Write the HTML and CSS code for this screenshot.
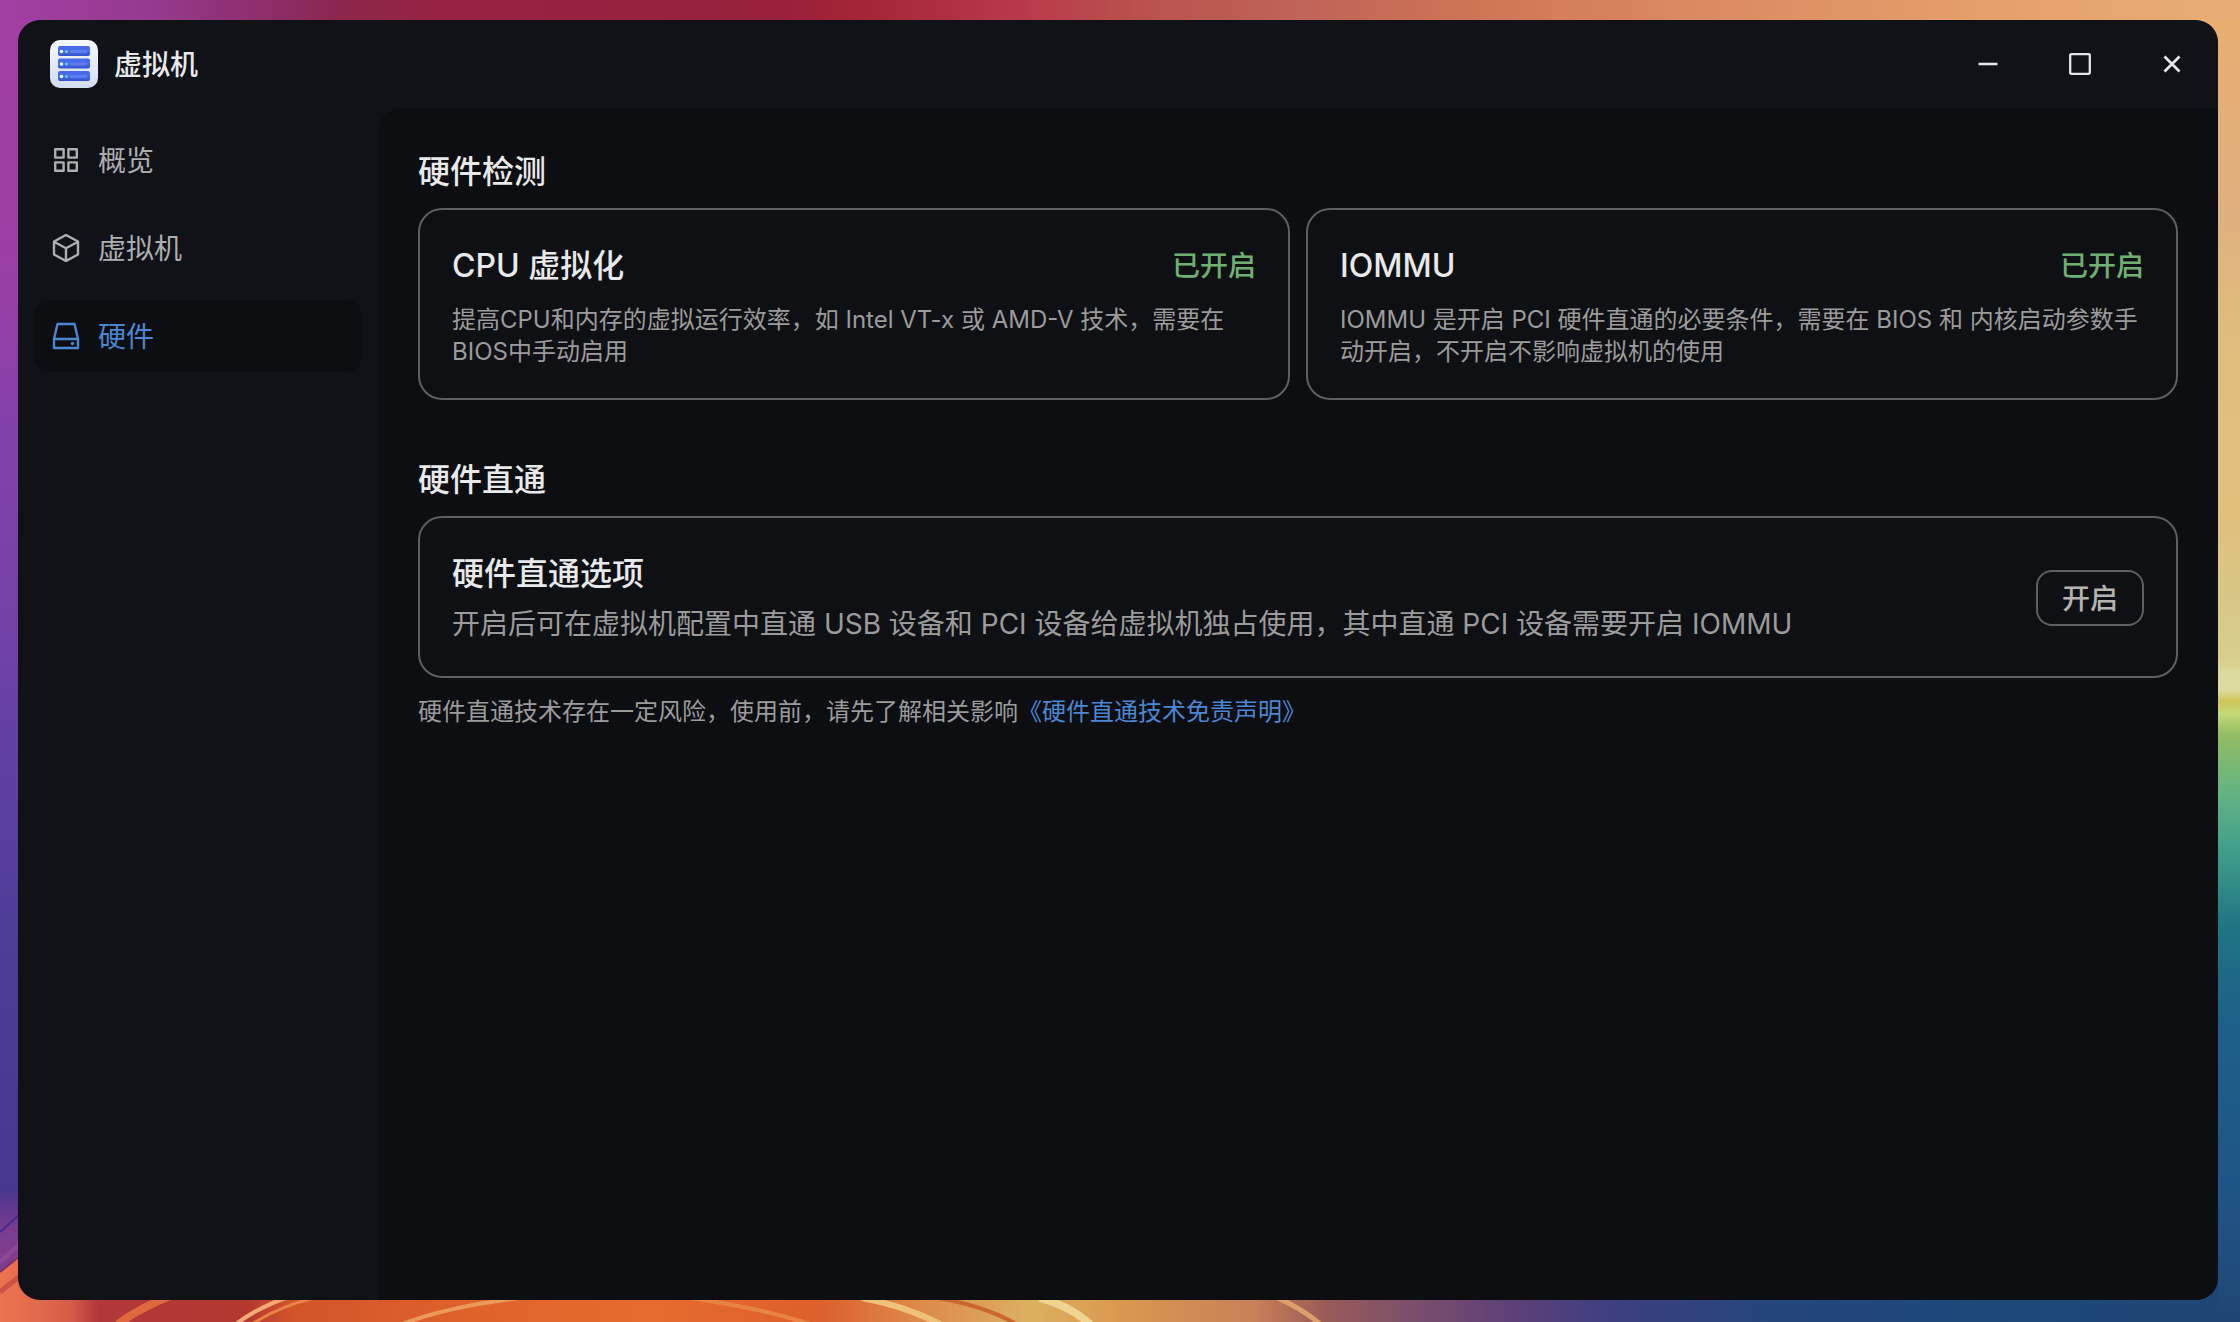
FILE: index.html
```html
<!DOCTYPE html>
<html lang="zh-CN">
<head>
<meta charset="utf-8">
<meta name="viewport" content="width=device-width, initial-scale=1">
<title>虚拟机</title>
<link rel="stylesheet" href="styles.css">
</head>
<body class="desktop">
<svg class="wallpaper" viewBox="0 0 2240 1322" preserveAspectRatio="none" aria-hidden="true">
  <defs>
    <linearGradient id="top" gradientUnits="userSpaceOnUse" x1="0" y1="0" x2="2240" y2="0">
      <stop offset="0" stop-color="#a23fa3"/><stop offset=".065" stop-color="#963a90"/><stop offset=".128" stop-color="#8c2c64"/><stop offset=".155" stop-color="#8b2648"/><stop offset=".2" stop-color="#972142"/><stop offset=".35" stop-color="#98203a"/><stop offset=".39" stop-color="#a52735"/><stop offset=".45" stop-color="#b8374a"/><stop offset=".51" stop-color="#b9524d"/><stop offset=".58" stop-color="#c06358"/><stop offset=".65" stop-color="#cd7355"/><stop offset=".74" stop-color="#d98760"/><stop offset=".89" stop-color="#e5a06b"/><stop offset="1" stop-color="#e8ae75"/>
    </linearGradient>
    <linearGradient id="left" gradientUnits="userSpaceOnUse" x1="0" y1="0" x2="0" y2="1322">
      <stop offset="0" stop-color="#a23fa3"/><stop offset=".22" stop-color="#983fa5"/><stop offset=".32" stop-color="#8441ab"/><stop offset=".45" stop-color="#7642a8"/><stop offset=".57" stop-color="#6140a3"/><stop offset=".7" stop-color="#4f3d98"/><stop offset=".9" stop-color="#49368f"/><stop offset=".93" stop-color="#7a3c90"/><stop offset="1" stop-color="#8a4088"/>
    </linearGradient>
    <linearGradient id="right" gradientUnits="userSpaceOnUse" x1="0" y1="0" x2="0" y2="1322">
      <stop offset="0" stop-color="#eaae70"/><stop offset=".16" stop-color="#dfb07f"/><stop offset=".255" stop-color="#e0bd7c"/><stop offset=".39" stop-color="#e2c07c"/><stop offset=".45" stop-color="#d7c686"/><stop offset=".5" stop-color="#d8cf8c"/><stop offset=".51" stop-color="#dcdca0"/><stop offset=".522" stop-color="#dcdca0"/><stop offset=".53" stop-color="#cfc658"/><stop offset=".54" stop-color="#c5d978"/><stop offset=".555" stop-color="#94bd63"/><stop offset=".6" stop-color="#63b383"/><stop offset=".64" stop-color="#43a08a"/><stop offset=".7" stop-color="#1f7583"/><stop offset=".77" stop-color="#1d6088"/><stop offset=".89" stop-color="#1f5687"/><stop offset="1" stop-color="#1f4674"/>
    </linearGradient>
    <linearGradient id="bottom" gradientUnits="userSpaceOnUse" x1="0" y1="0" x2="2240" y2="0">
      <stop offset="0" stop-color="#ec7350"/><stop offset=".02" stop-color="#e0684c"/><stop offset=".032" stop-color="#d65a48"/><stop offset=".044" stop-color="#b0383a"/><stop offset=".11" stop-color="#b3382f"/><stop offset=".13" stop-color="#d2542a"/><stop offset=".22" stop-color="#e0642a"/><stop offset=".29" stop-color="#e66b2e"/><stop offset=".366" stop-color="#dd602c"/><stop offset=".41" stop-color="#dd8a48"/><stop offset=".46" stop-color="#dcb060"/><stop offset=".5" stop-color="#da984f"/><stop offset=".56" stop-color="#c88058"/><stop offset=".592" stop-color="#9a5a58"/><stop offset=".63" stop-color="#7a4f6a"/><stop offset=".675" stop-color="#5d4078"/><stop offset=".72" stop-color="#3c3f80"/><stop offset=".79" stop-color="#24457c"/><stop offset=".88" stop-color="#1c487a"/><stop offset="1" stop-color="#1f4674"/>
    </linearGradient>
  </defs>
  <path fill="url(#top)" d="M0 0H2240V60H0Z"/>
  <path fill="url(#left)" d="M0 20H60V1322H0Z"/>
  <path fill="url(#right)" d="M2200 20H2240V1322H2200Z"/>
  <path fill="url(#bottom)" d="M0 1272Q10 1265 18 1256L60 1270H2218V1322H0Z"/>
  <g fill="none">
    <path stroke="#45288a" stroke-width="2" d="M0 1232L20 1214"/>
    <path stroke="#7a2f6c" stroke-width="2" d="M0 1272L20 1256"/>
    <path stroke="#8a4796" stroke-width="5" d="M0 1262L20 1244"/>
    <path stroke="#cf5044" stroke-width="5" d="M0 1292L20 1276"/>
    <path stroke="#e0683f" stroke-width="8" d="M118 1324Q140 1308 170 1296"/>
    <path stroke="#f5a878" stroke-width="4" d="M236 1324Q260 1306 292 1296"/>
    <path stroke="#e98246" stroke-width="3" d="M252 1324Q280 1306 314 1298"/>
    <path stroke="#eb9a5a" stroke-width="4" d="M402 1324Q450 1306 520 1298"/>
    <path stroke="#e88442" stroke-width="4" d="M690 1298Q760 1308 810 1324"/>
    <path stroke="#eec27a" stroke-width="6" d="M862 1298Q905 1306 940 1324"/>
    <path stroke="#c8682e" stroke-width="4" d="M938 1298Q985 1306 1016 1324"/>
    <path stroke="#f0d590" stroke-width="8" d="M1040 1298Q1070 1306 1090 1324"/>
    <path stroke="#e0a06a" stroke-width="5" d="M1278 1298Q1304 1310 1320 1324"/>
  </g>
</svg>

<div class="window">
  <header class="titlebar">
    <svg class="app-icon" viewBox="0 0 48 48" aria-hidden="true">
      <defs>
        <linearGradient id="plate" x1="0" y1="0" x2="0" y2="1"><stop offset="0" stop-color="#f4f8fd"/><stop offset="1" stop-color="#d3dcf4"/></linearGradient>
        <linearGradient id="unit" x1="0" y1="0" x2="0" y2="1"><stop offset="0" stop-color="#4a66e6"/><stop offset=".5" stop-color="#4570ec"/><stop offset="1" stop-color="#3450cc"/></linearGradient>
      </defs>
      <rect width="48" height="48" rx="10" fill="url(#plate)"/>
      <g fill="url(#unit)"><rect x="8" y="6" width="32" height="10" rx="2"/><rect x="8" y="18.500" width="32" height="10" rx="2"/><rect x="8" y="31" width="32" height="10" rx="2"/></g>
      <g fill="#5f7cee"><rect x="20" y="10" width="17" height="3" rx="1"/><rect x="20" y="22.500" width="17" height="3" rx="1"/><rect x="20" y="35" width="17" height="3" rx="1"/></g>
      <g fill="#dcfaff"><circle cx="11.500" cy="11.500" r="1.800"/><circle cx="11.500" cy="24" r="1.800"/><circle cx="11.500" cy="36.500" r="1.800"/></g>
      <g fill="#6cc4f8"><circle cx="16.500" cy="11.500" r="1.600"/><circle cx="16.500" cy="24" r="1.600"/><circle cx="16.500" cy="36.500" r="1.600"/></g>
    </svg>
    <h1 class="app-title">虚拟机</h1>
    <div class="window-controls">
      <button class="control" type="button" aria-label="最小化"><svg viewBox="0 0 24 24"><path stroke-width="2.500" d="M2.500 12H21.500"/></svg></button>
      <button class="control" type="button" aria-label="最大化"><svg viewBox="0 0 24 24"><rect x="2.200" y="2.200" width="19.600" height="19.600" rx="1" stroke-width="2.300"/></svg></button>
      <button class="control" type="button" aria-label="关闭"><svg viewBox="0 0 24 24"><path stroke-width="2.800" d="M4.500 4.500L19.500 19.500M19.500 4.500L4.500 19.500"/></svg></button>
    </div>
  </header>

  <div class="body">
    <nav class="sidebar">
      <a class="nav-item" href="#overview">
        <svg class="nav-icon" viewBox="0 0 28 28"><path d="M3.200 3.200h8.400v8.400H3.200zM16.400 3.200h8.400v8.400h-8.400zM3.200 16.400h8.400v8.400H3.200zM16.400 16.400h8.400v8.400h-8.400z"/></svg>
        <span class="nav-label">概览</span>
      </a>
      <a class="nav-item" href="#machines">
        <svg class="nav-icon" viewBox="0 0 28 28"><path d="M14 1L26 7.500V20.500L14 27L2 20.500V7.500ZM2.500 8L14 14.200L25.500 8M14 14.200V26.500"/></svg>
        <span class="nav-label">虚拟机</span>
      </a>
      <a class="nav-item active" href="#hardware" aria-current="page">
        <svg class="nav-icon" viewBox="0 0 28 28"><path d="M5.500 2H22.500L26 17V26H2V17ZM2 17H26"/><circle cx="20.500" cy="21.500" r="1.700" fill="currentColor" stroke="none"/></svg>
        <span class="nav-label">硬件</span>
      </a>
    </nav>

    <main class="content">
      <section class="section">
        <h2 class="heading">硬件检测</h2>
        <div class="card-grid">
          <article class="card">
            <div class="card-head"><h3 class="card-title">CPU 虚拟化</h3><span class="status">已开启</span></div>
            <p class="card-text">提高CPU和内存的虚拟运行效率，如 Intel VT-x 或 AMD-V 技术，需要在BIOS中手动启用</p>
          </article>
          <article class="card">
            <div class="card-head"><h3 class="card-title">IOMMU</h3><span class="status">已开启</span></div>
            <p class="card-text">IOMMU 是开启 PCI 硬件直通的必要条件，需要在 BIOS 和 内核启动参数手动开启，不开启不影响虚拟机的使用</p>
          </article>
        </div>
      </section>

      <section class="section">
        <h2 class="heading">硬件直通</h2>
        <article class="card option">
          <div class="option-body">
            <h3 class="card-title">硬件直通选项</h3>
            <p class="option-text">开启后可在虚拟机配置中直通 USB 设备和 PCI 设备给虚拟机独占使用，其中直通 PCI 设备需要开启 IOMMU</p>
          </div>
          <button class="button" type="button">开启</button>
        </article>
        <p class="note">硬件直通技术存在一定风险，使用前，请先了解相关影响<a class="link" href="#disclaimer">《硬件直通技术免责声明》</a></p>
      </section>
    </main>
  </div>
</div>
</body>
</html>
```
FILE: styles.css
```css
*, *::before, *::after {
  box-sizing: border-box;
}

.desktop {
  margin: 0;
  min-height: 100vh;
  padding: 20px 22px 22px 18px;
  display: flex;
  background: #1f4674;
  color: #e8e9ea;
  font-family: Inter, "Noto Sans CJK SC", sans-serif;
  font-size: 28px;
}

.wallpaper {
  position: absolute;
  inset: 0;
  z-index: -1;
  width: 100%;
  height: 100%;
}

.window {
  flex: 1;
  display: flex;
  flex-direction: column;
  overflow: hidden;
  border-radius: 22px;
  background: #101218;
}

h1, h2, h3, p {
  margin: 0;
}

.titlebar {
  height: 88px;
  padding: 0 0 0 32px;
  display: flex;
  align-items: center;
  gap: 16px;
}

.app-icon {
  width: 48px;
  height: 48px;
}

.app-title {
  padding-bottom: 2px;
  font-size: 28px;
  font-weight: 500;
}

.window-controls {
  margin-left: auto;
  display: flex;
}

.control {
  width: 92px;
  height: 88px;
  padding: 0;
  border: 0;
  background: none;
  color: #e6e6e8;
  display: grid;
  place-items: center;
}

.control svg {
  width: 24px;
  height: 24px;
  fill: none;
  stroke: currentColor;
}

.body {
  flex: 1;
  display: flex;
}

.sidebar {
  width: 360px;
  padding: 16px;
  display: flex;
  flex-direction: column;
  gap: 16px;
}

.nav-item {
  height: 72px;
  padding: 0 18px;
  display: flex;
  align-items: center;
  gap: 18px;
  border-radius: 16px;
  color: #adaeb0;
  text-decoration: none;
}

.nav-item.active {
  background: #0d0e12;
  color: #4b86d2;
}

.nav-icon {
  width: 28px;
  height: 28px;
  fill: none;
  stroke: currentColor;
  stroke-width: 2.4;
  stroke-linejoin: round;
}

.nav-label {
  padding-bottom: 2px;
}

.content {
  flex: 1;
  padding: 40px;
  display: flex;
  flex-direction: column;
  gap: 56px;
  border-top-left-radius: 24px;
  background: #0d0e12;
}

.heading,
.card-title {
  font-size: 32px;
  font-weight: 500;
  line-height: 48px;
}

.heading {
  margin-bottom: 12px;
}

.card-grid {
  display: grid;
  grid-template-columns: 1fr 1fr;
  gap: 16px;
}

.card {
  padding: 32px 32px 30px;
  border: 2px solid #5e5f60;
  border-radius: 24px;
  background: #0f1013;
}

.card-head {
  margin-bottom: 14px;
  display: flex;
  align-items: center;
  justify-content: space-between;
}

.status {
  color: #6fb072;
  font-weight: 500;
  line-height: 48px;
}

.card-text,
.note {
  color: #9b9b9b;
  font-size: 24px;
  line-height: 32px;
}

.option {
  display: flex;
  align-items: center;
  justify-content: space-between;
  gap: 32px;
}

.option-text {
  margin-top: 4px;
  color: #9b9b9b;
  line-height: 44px;
}

.button {
  width: 108px;
  height: 56px;
  flex: none;
  padding: 0 0 2px;
  border: 2px solid #5e5f60;
  border-radius: 16px;
  background: transparent;
  color: #b4b3af;
  font: inherit;
  font-weight: 500;
}

.note {
  margin-top: 18px;
}

.link {
  color: #4b86d2;
  text-decoration: none;
}
```
